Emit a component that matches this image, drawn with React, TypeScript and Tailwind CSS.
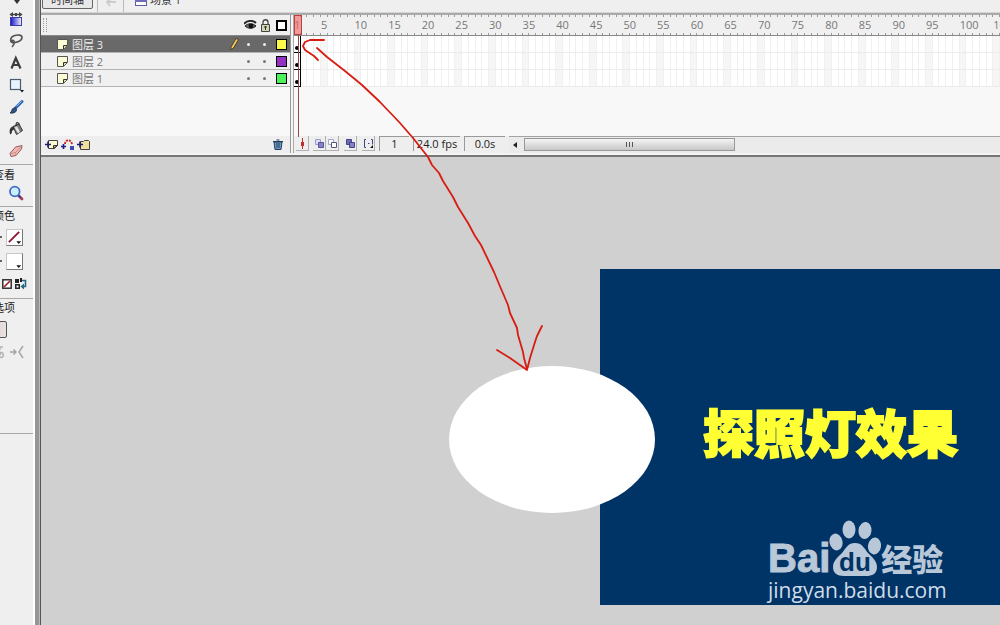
import type { ReactNode } from "react";
import clsx from "clsx";

const layers = [
  { name: "图层 3", swatch: "bg-[#fcf84c]", active: true },
  { name: "图层 2", swatch: "bg-[#9430c4]", active: false },
  { name: "图层 1", swatch: "bg-[#4cf058]", active: false },
];

const frames = Array.from({ length: 105 }, (_, i) => i + 1);

function Icon({ size = 16, className, children }: { size?: number; className?: string; children: ReactNode }) {
  return (
    <svg width={size} height={size} viewBox="0 0 16 16" fill="none" className={clsx("shrink-0", className)} aria-hidden="true">
      {children}
    </svg>
  );
}

const tools = [
  {
    label: "Gradient transform",
    icon: (
      <>
        <defs>
          <linearGradient id="grad">
            <stop offset="0" stopColor="#1414c8" />
            <stop offset="1" stopColor="#f4f4ff" />
          </linearGradient>
        </defs>
        <path d="M2 3.500h12" stroke="#444" strokeWidth="1.400" />
        <path d="M5 1v5L1.500 3.500zM11 1v5l3.500-2.500zM7 2h2v3H7z" fill="#444" />
        <rect x="2.500" y="6.500" width="11" height="8" fill="url(#grad)" stroke="#3c3ca8" />
      </>
    ),
  },
  {
    label: "Lasso",
    icon: (
      <path
        d="M5 10C1.500 9 2 4.500 6 2.800c4-1.600 8-.8 8 1.700 0 3.700-6 5.500-9 4.700-1.800-.6-1-2.600.4-1.800 1.600 1 1.400 3.600-1.400 6.600"
        stroke="#555"
        strokeWidth="1.600"
      />
    ),
  },
  {
    label: "Text",
    icon: <path d="M3.500 13.500L7.800 3l4.700 10.500M5 10h6" stroke="#3c3c3c" strokeWidth="2.200" />,
  },
  {
    label: "Rectangle",
    icon: (
      <>
        <rect x="2.500" y="2.500" width="10" height="10" fill="#e8f4fc" stroke="#4c5c6c" strokeWidth="1.200" />
        <path d="M12 13h4l-2 2.500z" fill="#111" />
      </>
    ),
  },
  {
    label: "Brush",
    icon: (
      <>
        <path d="M14 2.500L8 8.500" stroke="#2c64b8" strokeWidth="3" strokeLinecap="round" />
        <path d="M13.500 2.300L8.500 7.300" stroke="#9cc4f0" />
        <path d="M2 14c2-.5 1-3.500 3.500-5 1.500-1 3.500.5 3 2.500-.5 2-3.500 3-6.500 2.500z" fill="#34507c" stroke="#1c2c4c" strokeWidth=".8" />
      </>
    ),
  },
  {
    label: "Paint bucket",
    icon: (
      <>
        <path d="M5 5.500l6-2.500 3.500 6.500L8.500 13.500z" fill="#7c7c7c" stroke="#333" />
        <path d="M6.500 6.500l2.500-1.200 3 5.700-2 1.200z" fill="#e4e4e4" />
        <path d="M8.500 5c-1.500-4 2-4.500 3-1" stroke="#333" strokeWidth="1.200" />
        <path d="M5.500 5.500C2 6 1 9 2 13c1 1 2-1 2-3l2.500-2z" fill="#333" />
      </>
    ),
  },
  {
    label: "Eraser",
    icon: (
      <>
        <path d="M2 10.500L7.500 4l6.500-1.500-.5 3.500L8 12.500l-5 1z" fill="#f0b8b4" stroke="#985c5c" />
        <path d="M2.500 10.500l5-1 6-6.500M7.500 9.500l.5 3" stroke="#c88484" strokeWidth=".8" />
      </>
    ),
  },
];

function ToolSection({ title, className, children }: { title?: string; className?: string; children: ReactNode }) {
  return (
    <section className={clsx("border-b border-[#a8a8a8]", className)}>
      {title && <h2 className="h-[18px] pl-[13px] text-[11px] leading-[18px] text-[#222]">{title}</h2>}
      {children}
    </section>
  );
}

function Swatch({ label, none }: { label: string; none?: boolean }) {
  return (
    <div className="flex h-6 items-center gap-1 pl-[18px]">
      <span className="h-0.5 w-1 bg-[#666]" />
      <button aria-label={label} className="flex size-[17px] items-center justify-center border border-r-[#777] border-b-[#777] border-[#c8c8c8] bg-white">
        <Icon size={15}>
          {none && <path d="M2 13L13 2" stroke="#901830" strokeWidth="2" />}
          <path d="M10 12h5l-2.500 3z" fill="#111" />
        </Icon>
      </button>
    </div>
  );
}

function Toolbar() {
  return (
    <aside className="flex shrink-0 overflow-hidden border-r border-[#555] bg-[#efefef]">
      <div className="-ml-5 w-[53px]">
        <ToolSection className="pb-0.5">
          <div className="flex h-2 items-start pl-[34px]">
            <svg width="6" height="5" aria-hidden="true">
              <path d="M0 0h6L3 4z" fill="#333" />
            </svg>
          </div>
          {tools.map((tool) => (
            <button key={tool.label} aria-label={tool.label} className="flex h-[22px] w-full items-center pl-7">
              <Icon>{tool.icon}</Icon>
            </button>
          ))}
        </ToolSection>
        <ToolSection title="查看" className="pt-px pb-1">
          <button aria-label="Zoom" className="flex h-[18px] w-full items-center pl-7">
            <Icon>
              <path d="M10 10l4 4" stroke="#a83c5c" strokeWidth="2.800" strokeLinecap="round" />
              <path d="M9.500 9.500l3 3" stroke="#2c3c88" strokeWidth="1.600" />
              <circle cx="6.800" cy="6.500" r="4.800" fill="#c8f0fc" stroke="#4468c8" strokeWidth="1.800" />
            </Icon>
          </button>
        </ToolSection>
        <ToolSection title="颜色" className="pb-[3px]">
          <Swatch label="Stroke color" none />
          <Swatch label="Fill color" />
          <div className="flex h-[22px] items-center gap-[3px] pl-[22px]">
            <button aria-label="No color">
              <svg width="10" height="10" className="block">
                <rect x=".8" y=".8" width="8.400" height="8.400" fill="#fff" stroke="#222" strokeWidth="1.400" />
                <path d="M2 8L8 2" stroke="#a01820" strokeWidth="1.600" />
              </svg>
            </button>
            <button aria-label="Swap colors">
              <svg width="12" height="12" className="block" fill="none">
                <path d="M0 1h4v4H0zM0 6h5v5H0z" fill="#222" />
                <path d="M5 0h2v4H5z" fill="#222" />
                <path d="M1.500 7.500h2v2h-2z" fill="#fff" />
                <path d="M7 2.500h3.500v6H7" stroke="#286880" strokeWidth="1.600" />
                <path d="M9 5.500v6L5.500 8.500z" fill="#286880" />
              </svg>
            </button>
          </div>
        </ToolSection>
        <ToolSection title="选项" className="pb-[70px]">
          <div className="flex h-6 items-center pl-2.5">
            <button aria-label="Object drawing" className="h-[17px] w-[17px] rounded-xs border border-[#555] bg-linear-to-r from-[#f0c8c8] to-[#e4e4e4]" />
          </div>
          <div className="flex h-[22px] items-center gap-1 pl-3.5">
            <svg width="12" height="14" fill="none" stroke="#b4b4b4" strokeWidth="1.400" aria-hidden="true">
              <path d="M9 2H6v3M4 7.500h3c3 0 3 5 0 5-2 0-2-3 0-4" />
            </svg>
            <svg width="14" height="14" fill="none" stroke="#a4a4a4" strokeWidth="1.400" aria-hidden="true">
              <path d="M0 7h6M3.500 4.500L6 7 3.500 9.500M13 1L9 7l4 6" />
            </svg>
          </div>
        </ToolSection>
      </div>
      <div className="w-0.5 bg-white" />
      <div className="w-[5px] border-r border-[#bbb] bg-[#969696]" />
    </aside>
  );
}

function SceneBar() {
  return (
    <header className="flex h-[13px] items-end overflow-hidden border-b border-[#d4d4d4] bg-[#efefef] pl-px text-[11px] leading-4 text-[#333]">
      <button className="mb-[3px] h-[18px] w-[51px] shrink-0 rounded-xs border border-[#666] bg-[#e8e8e8] leading-4">时间轴</button>
      <div className="ml-1 flex h-full w-[27px] items-start justify-center border-x border-[#bbb]">
        <svg width="10" height="7" fill="none" stroke="#ccc" strokeWidth="2" aria-hidden="true">
          <path d="M10 2H1M4 0L1 2l3 4" />
        </svg>
      </div>
      <svg width="12" height="14" className="mb-1.5 ml-[11px]" aria-hidden="true">
        <rect x=".5" y=".5" width="11" height="13" fill="#fff" stroke="#5c5ca0" />
        <path d="M0 7h12v3H0z" fill="#6c6cb8" />
      </svg>
      <span className="mb-1 ml-[3px]">场景 1</span>
    </header>
  );
}

function PageIcon() {
  return (
    <svg width="11" height="11" aria-hidden="true">
      <path d="M.5 .5h10v6l-4 4h-6z" fill="#fcfcd4" stroke="#555" />
      <path d="M6.500 10V6.500H10" fill="#d8d8a0" stroke="#333" />
    </svg>
  );
}

function LayerPanel() {
  return (
    <div className="flex w-[250px] shrink-0 flex-col border-r border-[#999] bg-[#f8f8f8]">
      <div className="flex h-[21px] items-center border-b border-[#888] bg-[#efefef] pr-[3px] pl-0.5">
        <span className="h-3.5 w-1 border-x border-dotted border-[#999]" />
        <svg width="13" height="10" className="ml-auto" fill="none" aria-hidden="true">
          <path d="M0 4c3-4 9-4 12-1" stroke="#222" strokeWidth="1.800" />
          <path d="M1 6c3-3 8-3 11 0-3 3-8 3-11 0z" fill="#666" stroke="#222" />
          <circle cx="7" cy="6" r="2.400" fill="#111" />
        </svg>
        <svg width="9" height="13" className="ml-1" fill="none" aria-hidden="true">
          <path d="M2 6V3c0-3 5-3 5 0v3" stroke="#444" strokeWidth="1.300" />
          <path d="M.5 5.500h8v7h-8z" fill="#d0d8b0" stroke="#444" />
          <path d="M3 8h3M4.500 7v4" stroke="#333" />
        </svg>
        <span className="ml-1.5 size-[11px] border-2 border-black bg-white" />
      </div>
      {layers.map((layer) => (
        <div
          key={layer.name}
          className={clsx(
            "flex h-[17px] items-center border-b border-[#b4b4b4] pr-[3px] pl-4 text-[11px]",
            layer.active ? "bg-[#696969] text-[#eee]" : "bg-[#f0f0f0] text-[#777]",
          )}
        >
          <PageIcon />
          <button className="ml-1 pt-px leading-4">{layer.name}</button>
          {layer.active && (
            <svg width="9" height="12" className="ml-auto" aria-hidden="true">
              <path d="M6 .5l2.500 1L3.500 10 1 11.500 1 9z" fill="#f0c860" stroke="#3c2c14" strokeWidth=".8" />
            </svg>
          )}
          <div className={clsx("flex items-center", layer.active ? "ml-2" : "ml-auto")}>
            <button aria-label={`Show ${layer.name}`} className="size-[3px] rounded-full bg-current" />
            <button aria-label={`Lock ${layer.name}`} className="ml-[13px] size-[3px] rounded-full bg-current" />
            <button aria-label={`Outline ${layer.name}`} className={clsx("ml-2.5 size-[11px] border border-black", layer.swatch)} />
          </div>
        </div>
      ))}
      <div className="mt-auto flex h-[17px] items-center gap-[3px] bg-[#eeeeee] pr-[7px] pl-1">
        <button aria-label="Insert layer">
          <svg width="13" height="11" className="block">
            <path d="M3.500 1.500h9v5l-3 3h-6z" fill="#fcfcd0" stroke="#444" />
            <path d="M8.500 9.500v-3h4z" fill="#b8b878" stroke="#333" />
            <path d="M0 5.500h6M3 2.500v6" stroke="#1c1c68" strokeWidth="1.600" />
          </svg>
        </button>
        <button aria-label="Add motion guide">
          <svg width="13" height="11" className="block" fill="none">
            <path d="M4 5c0-5 7-5 7 1" stroke="#c81c1c" strokeWidth="1.800" strokeDasharray="2 1" />
            <path d="M0 7.500h5M2.500 5v5" stroke="#1c1c88" strokeWidth="1.600" />
            <path d="M9 7h4v4H9z" fill="#3c4cb0" />
          </svg>
        </button>
        <button aria-label="Insert layer folder">
          <svg width="13" height="11" className="block">
            <path d="M3.500 2.500h3l1-1h4l1 1v8h-9z" fill="#f0e0a0" stroke="#444" />
            <path d="M0 5.500h6M3 2.500v6" stroke="#1c1c68" strokeWidth="1.600" />
          </svg>
        </button>
        <button aria-label="Delete layer" className="ml-auto">
          <svg width="10" height="11" className="block" fill="none">
            <path d="M1 3h8l-1 7.500H2z" fill="#6c9cc8" stroke="#243c5c" />
            <path d="M0 2.500h10M3.500 1h3M4 4v5M6 4v5" stroke="#243c5c" />
          </svg>
        </button>
      </div>
    </div>
  );
}

function ControlButton({ label, className, children }: { label: string; className?: string; children: ReactNode }) {
  return (
    <button aria-label={label} className={clsx("flex h-[15px] w-[13px] items-center justify-center border-r border-b border-[#b0b0b0]", className)}>
      <svg width="11" height="11" fill="none" aria-hidden="true">
        {children}
      </svg>
    </button>
  );
}

function Readout({ className, children }: { className: string; children: ReactNode }) {
  return (
    <output className={clsx("h-[15px] border-t border-l border-[#999] text-center text-[11px] leading-[14px] whitespace-nowrap text-[#222]", className)}>
      {children}
    </output>
  );
}

function Frames() {
  return (
    <div className="relative flex min-w-0 flex-1 flex-col overflow-hidden bg-[#f8f8f8]">
      <div className="grid h-[21px] grid-cols-[repeat(105,minmax(0,1fr))] border-b border-[#888] bg-[#f0f0f0]">
        {frames.map((n) => (
          <div key={n} className="flex flex-col">
            <span className="h-0.5 border-r border-[#999]" />
            <span className="h-4 text-[11px] leading-[15px] whitespace-nowrap text-[#777]">{(n === 1 || n % 5 === 0) && n}</span>
            <span className="h-0.5 border-r border-[#999]" />
          </div>
        ))}
      </div>
      {layers.map((layer) => (
        <div key={layer.name} className="grid h-[17px] grid-cols-[repeat(105,minmax(0,1fr))] border-b border-[#ececec]">
          {frames.map((n) =>
            n === 1 ? (
              <div key={n} className="-mb-px flex items-end justify-center border-r border-b border-black bg-white pb-0.5">
                <span className="size-1 shrink-0 rounded-full bg-black" />
              </div>
            ) : (
              <div key={n} className={clsx("border-r border-[#f0f0f0]", n % 5 === 0 ? "bg-[#f6f6f6]" : "bg-white")} />
            ),
          )}
        </div>
      ))}
      {/* playhead */}
      <div className="absolute top-0 left-0 flex h-[122px] w-2 flex-col items-center">
        <div className="h-5 w-full border border-[#b84040] bg-[#f06060]/60" />
        <div className="w-px flex-1 bg-[#984848]" />
      </div>
      <div className="mt-auto flex h-[17px] items-start bg-[#eeeeee] pl-0.5">
        <ControlButton label="Center frame">
          <path d="M5.500 0v11" stroke="#c03030" />
          <path d="M4 4h3v4H4z" fill="#c03030" />
        </ControlButton>
        <ControlButton label="Onion skin" className="ml-1">
          <path d="M1.500 1.500h5v5h-5z" fill="#dcdcf4" stroke="#9c9ccc" />
          <path d="M4.500 4.500h5v5h-5z" fill="#8484c0" stroke="#54549c" />
        </ControlButton>
        <ControlButton label="Onion skin outlines">
          <path d="M1.500 1.500h5v5h-5z" fill="#fff" stroke="#a4a4d0" />
          <path d="M4.500 4.500h5v5h-5z" fill="#fff" stroke="#54547c" />
        </ControlButton>
        <ControlButton label="Edit multiple frames" className="ml-[5px]">
          <path d="M1.500 1.500h5v5h-5z" fill="#6c6cb0" stroke="#44448c" />
          <path d="M4.500 4.500h5v5h-5z" fill="#8484c0" stroke="#44448c" />
        </ControlButton>
        <ControlButton label="Modify onion markers" className="ml-[5px]">
          <path d="M3 1.500H1.500v8H3M8 1.500h1.500v5M5 5.500h1.500" stroke="#44447c" />
          <path d="M10 7v3H7z" fill="#111" />
        </ControlButton>
        <Readout className="ml-1 w-[30px]">1</Readout>
        <Readout className="ml-1 w-[47px]">24.0 fps</Readout>
        <Readout className="ml-1 w-[41px]">0.0s</Readout>
        <div className="ml-1 flex h-full flex-1 items-start border-t border-[#a4a4a4] bg-[#ebebeb] pt-px">
          <button aria-label="Scroll left" className="flex h-[13px] w-[15px] items-center justify-center pr-1">
            <svg width="4" height="6">
              <path d="M4 0v6L0 3z" fill="#222" />
            </svg>
          </button>
          <div className="flex h-[13px] w-[211px] items-center justify-center gap-0.5 border border-[#999] bg-linear-to-b from-[#f4f4f4] to-[#c8c8c8]">
            <span className="h-[5px] w-px bg-[#555]" />
            <span className="h-[5px] w-px bg-[#555]" />
            <span className="h-[5px] w-px bg-[#555]" />
          </div>
        </div>
      </div>
    </div>
  );
}

function Watermark() {
  return (
    <div className="absolute top-[249px] left-[168px] text-[#b8c8d8]">
      <div className="flex h-[61px] items-end">
        <span className="pb-px font-['Liberation_Sans'] text-[40px] leading-10 font-bold [-webkit-text-stroke:1px_#b8c8d8]">Bai</span>
        <svg width="52" height="57" viewBox="0 0 52 57" className="-ml-px mb-0.5" aria-hidden="true">
          <g fill="currentColor">
            <ellipse cx="7" cy="22" rx="6.500" ry="8.500" transform="rotate(-12 7 22)" />
            <ellipse cx="20" cy="9.500" rx="6.500" ry="9" />
            <ellipse cx="36" cy="10.500" rx="6.500" ry="8.500" transform="rotate(8 36 10.500)" />
            <ellipse cx="45.500" cy="26" rx="6.500" ry="8.500" transform="rotate(8 45.500 26)" />
            <path d="M26 23c7 0 9 5 13 10 4 4 9 8 9 14 0 7-5 9-11 9H15c-7 0-11-3-11-9 0-6 5-10 9-14 4-5 6-10 13-10z" />
          </g>
          <text x="10" y="51" className="fill-[#003366] font-['Liberation_Sans'] text-[26px] font-bold">
            du
          </text>
        </svg>
        <span className="pb-0.5 text-[31px] leading-9 font-black">经验</span>
      </div>
      <a href="https://jingyan.baidu.com" className="block text-[21px] leading-[22px] font-medium text-[#d0dce8]">
        jingyan.baidu.com
      </a>
    </div>
  );
}

function Stage() {
  return (
    <main className="relative flex-1 overflow-hidden bg-[#d0d0d0]">
      <div className="absolute top-28 right-0 left-[559px] h-[336px] overflow-hidden bg-[#003366]">
        <h1 className="absolute top-[132px] left-[103px] text-[51px] leading-[64px] font-black whitespace-nowrap text-[#ffff33] [-webkit-text-stroke:2px_#ffff33]">
          探照灯效果
        </h1>
        <Watermark />
      </div>
      <div className="absolute top-[209px] left-[408px] h-[147px] w-[206px] rounded-[50%] bg-white" />
    </main>
  );
}

function Annotation() {
  return (
    <svg
      width="560"
      height="380"
      className="pointer-events-none absolute top-0 left-0"
      fill="none"
      stroke="#d81c14"
      strokeWidth="1.800"
      strokeLinecap="round"
      strokeLinejoin="round"
      aria-hidden="true"
    >
      <path d="M317 48L327 57 345 71 362 85 380 102 400 123 413 138 428 157 432 165 439 173 443 181 453 197 458 207 468 223 475 236 481 245 494 272 499 284 508 305 510 313 517 328 518 335 523 352 524 358 527 369" />
      <path d="M324 40h-14l-5 2-2 4 2 4 9 6 4 4" />
      <path d="M497 350l13 8 17 12 3-12 5-16 2-6 5-10" />
    </svg>
  );
}

export default function App() {
  return (
    <div className="relative flex h-screen overflow-hidden bg-[#efefef] font-['Open_Sans','Noto_Sans_CJK_SC',sans-serif]">
      <Toolbar />
      <div className="flex min-w-0 flex-1 flex-col">
        <SceneBar />
        <div className="flex h-[144px] border-t-2 border-b-2 border-t-[#aaa] border-b-[#777] bg-[#f4f4f4] pb-[2px]">
          <LayerPanel />
          <div className="w-[3px] shrink-0 border-r border-[#aaa] bg-[#f4f4f4]" />
          <Frames />
        </div>
        <Stage />
      </div>
      <Annotation />
    </div>
  );
}
